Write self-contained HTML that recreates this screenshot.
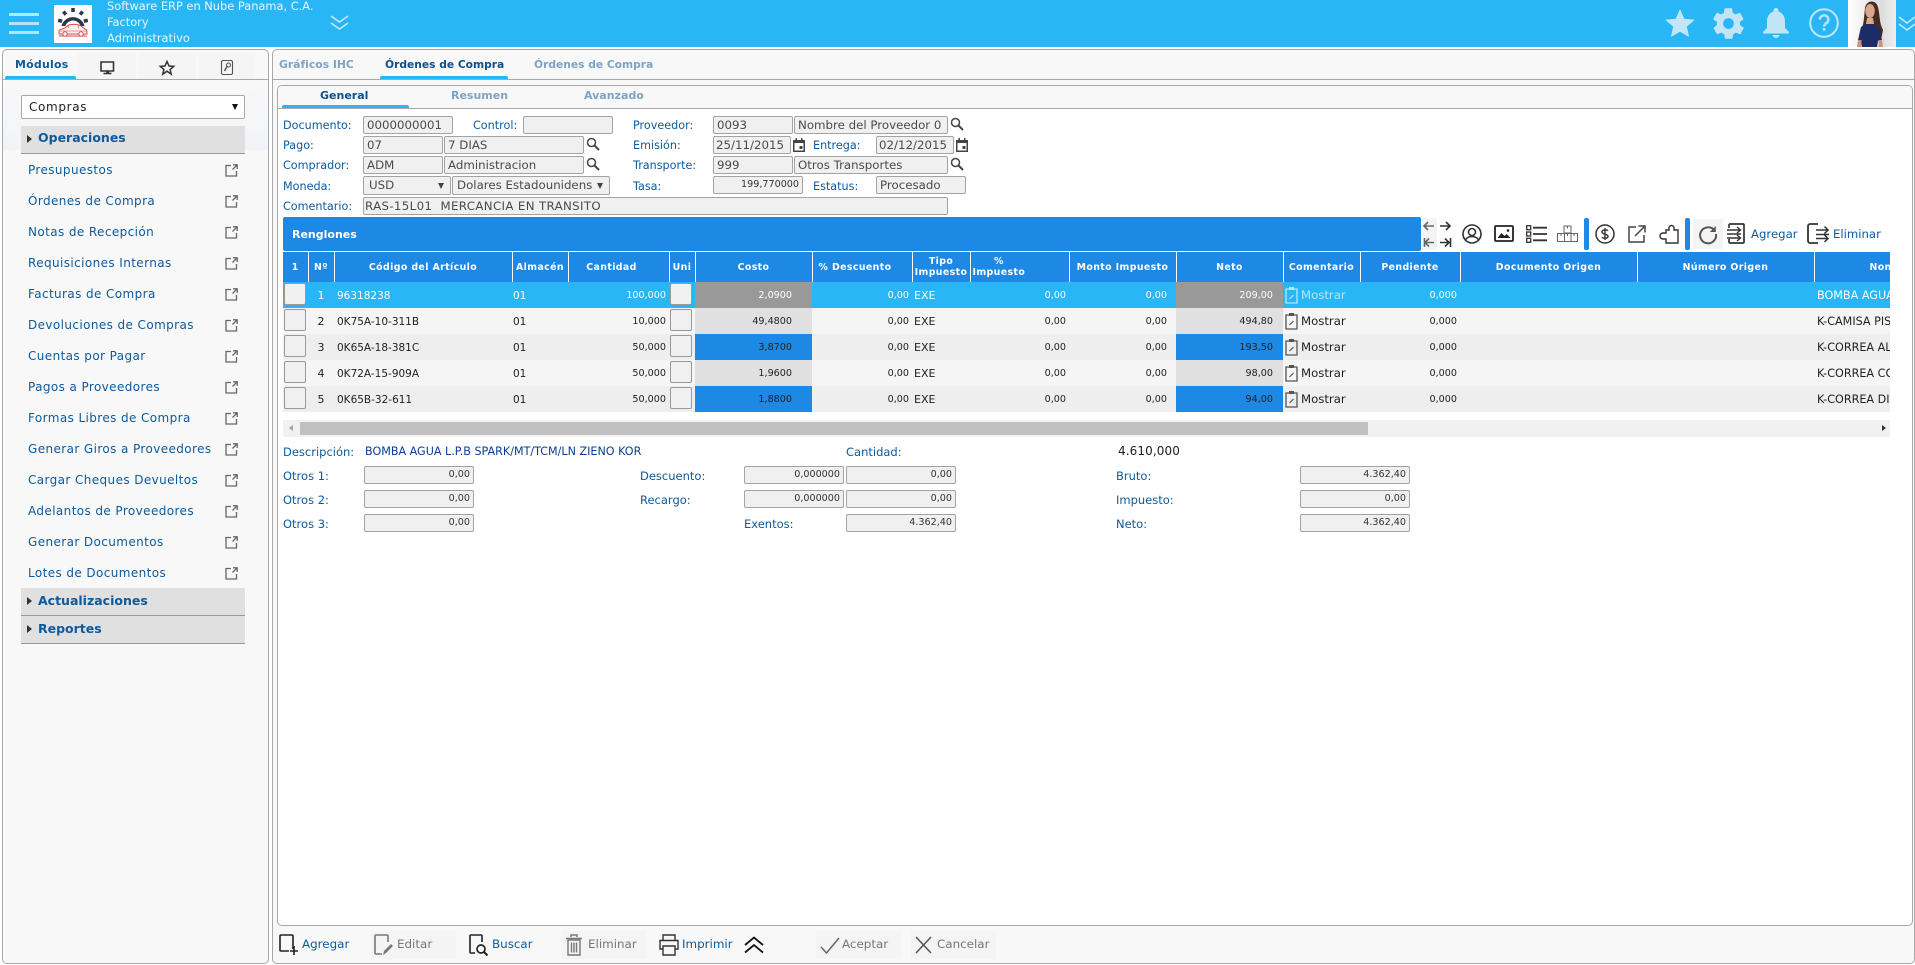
<!DOCTYPE html>
<html lang="es"><head><meta charset="utf-8"><title>Órdenes de Compra</title>
<style>
html,body{margin:0;padding:0;width:1915px;height:965px;overflow:hidden;background:#fff;font-family:"DejaVu Sans","Liberation Sans",sans-serif;color:#222}
.a{position:absolute;white-space:nowrap}
.l{position:absolute;white-space:nowrap;font-size:11.2px;color:#0d5a9c;line-height:18px;margin-top:1px}
.t{font-size:11.5px}
.i{position:absolute;box-sizing:border-box;height:18px;background:#f0f0f0;border:1px solid #a3a3a3;border-radius:2px;font-size:11.8px;line-height:16px;color:#4a4a4a;padding:0 3px;white-space:nowrap;overflow:hidden}
.n{text-align:right;font-size:9.6px;color:#333;padding:0 3px}
.m{position:absolute;left:28px;font-size:12px;letter-spacing:.4px;color:#0d5a9c;line-height:16px;white-space:nowrap}
.h{position:absolute;left:21px;width:224px;background:#e0e0e0;border-bottom:1px solid #999;box-sizing:border-box;font-weight:bold;font-size:12.5px;color:#0d5a9c;padding-left:17px;white-space:nowrap}
.h:before{content:"";position:absolute;left:6px;top:9px;border-left:5px solid #333;border-top:4px solid transparent;border-bottom:4px solid transparent}
.tab{position:absolute;font-weight:bold;white-space:nowrap;font-size:11px;line-height:14px}
.ul{position:absolute;background:#29b6f6;height:3px;border-radius:2px 2px 0 0}
.box{position:absolute;background:#f4f4f4}
.b{position:absolute;top:936px;font-size:11.9px;line-height:16px;white-space:nowrap}
svg{position:absolute;overflow:visible}
table{border-collapse:collapse;table-layout:fixed;width:1807px}
th{background:#1e88e5;color:#fff;font-size:9.4px;letter-spacing:.4px;font-weight:bold;height:30px;padding:0;border-left:1px solid #fff;text-align:center;line-height:11px;white-space:nowrap;overflow:hidden;box-sizing:border-box}
th:first-child{border-left:0}
td{height:26px;padding:1px 3px 0;font-size:10.5px;color:#222;white-space:nowrap;overflow:hidden;box-sizing:border-box;position:relative}
td.r{text-align:right;font-size:9.6px;padding:0 3px 0 0}
td.c{text-align:center;font-size:11px}
td.x{padding-left:2px;font-size:11px}
td.d{font-size:11.2px}
td.al{padding-left:1px}
td:nth-child(7){padding-right:20px}
td:nth-child(11){padding-right:9px}
td:nth-child(12){padding-right:10px}
tr.r1 td{background:#29b6f6;color:#fff}tr.r2 td{background:#f5f5f5}tr.r3 td{background:#eee}
tr.r1 td.k{background:#999}tr.r2 td.k{background:#e0e0e0}tr.r3 td.k{background:#1e88e5}
.cb{position:absolute;left:1px;top:1px;width:22px;height:22px;box-sizing:border-box;background:#f0f0f0;border:1px solid #999;border-radius:2px}
.mo{font-size:11.7px;position:absolute;left:18px;top:5px;line-height:16px}
</style></head><body>
<svg width="0" height="0" style="position:absolute"><defs>
<symbol id="ext" viewBox="0 0 13 13"><path d="M6 1.500H1v10.500h10.500V7M7.500 5.500L12 1M8 .8h4.200V5" fill="none" stroke="#666" stroke-width="1.300"/></symbol>
<symbol id="mg" viewBox="0 0 14 14"><circle cx="5.500" cy="5.500" r="4" fill="none" stroke="#444" stroke-width="1.500"/><path d="M8.500 8.500L13 13" stroke="#444" stroke-width="2"/></symbol>
<symbol id="cal" viewBox="0 0 12 14"><path d="M0 2h12v12H0z" fill="#444"/><path d="M1.500 5h9v7.500h-9z" fill="#fff"/><path d="M2.500 0h1.500v3H2.500zM8 0h1.500v3H8z" fill="#444"/><path d="M6.500 8h3v3h-3z" fill="#444"/></symbol>
<symbol id="clip" viewBox="0 0 13 18"><path d="M1 3h11v14H1z" fill="none" stroke="currentColor" stroke-width="1.300"/><path d="M4 1h5v3H4z" fill="currentColor"/><path d="M4.500 13l4-4" stroke="currentColor" stroke-width="1.200"/></symbol>
</defs></svg>

<!-- header -->
<div class="a" style="left:0;top:0;width:1915px;height:47px;background:#29b6f6"></div>
<div class="a" style="left:9px;top:12.500px;width:30px;height:3px;background:#b5e3f8"></div>
<div class="a" style="left:9px;top:21.500px;width:30px;height:3px;background:#b5e3f8"></div>
<div class="a" style="left:9px;top:31px;width:30px;height:3px;background:#b5e3f8"></div>
<div class="a" style="left:54px;top:5px;width:38px;height:38px;background:#fff"></div>
<svg style="left:54px;top:5px" width="38" height="38" viewBox="0 0 38 38">
<path d="M7.400 21A12 12 0 0 1 30.600 21L26.600 21A8 8 0 0 0 11.400 21Z" fill="#2b3a4a"/>
<g stroke="#2b3a4a" stroke-width="3.500"><path d="M19 3v4M26.100 9.600l2.500-3.100M11.900 9.600l-2.500-3.100M29.800 16.100l4-.7M8.200 16.100l-4-.7"/></g>
<path d="M5 29v-3c0-1 2-2 5-2.500l5-3.500c3-1 9-1 12 1l4 3c2 .5 2 2 2 5z" fill="#fdf0f0" stroke="#e0474c" stroke-width="1"/>
<path d="M6 26h26M15 20.500l-1 3M24 20.500l1 3" stroke="#e8777a" stroke-width=".8"/>
<path d="M5 31h28" stroke="#e0474c" stroke-width="1"/><circle cx="11" cy="29" r="2.200" fill="#fff" stroke="#e0474c"/><circle cx="27" cy="29" r="2.200" fill="#fff" stroke="#e0474c"/></svg>
<div class="a" style="left:107px;top:-2px;font-size:11.4px;line-height:16px;color:#e8f6fd">Software ERP en Nube Panama, C.A.<br>Factory<br>Administrativo</div>
<svg style="left:330px;top:15px" width="19" height="16"><path d="M1 1l8.500 6L18 1M1 8l8.500 6L18 8" fill="none" stroke="#c5e8f8" stroke-width="1.600"/></svg>
<svg style="left:1665px;top:8px" width="30" height="30" viewBox="0 0 30 30"><path d="M15 1l4.300 9.700 10.500 1-8 7 2.400 10.300L15 23.700 5.800 29l2.400-10.300-8-7 10.500-1z" fill="#c1e5f5"/></svg>
<svg style="left:1709.500px;top:4.500px" width="37" height="37" viewBox="0 0 24 24"><path d="M19.400 13c.1-.3.100-.7.100-1s0-.7-.1-1l2.100-1.600c.2-.2.200-.4.100-.6l-2-3.500c-.1-.2-.4-.3-.6-.2l-2.500 1c-.5-.4-1.100-.7-1.700-1l-.4-2.600c0-.3-.2-.4-.5-.4h-4c-.3 0-.5.200-.5.400l-.4 2.600c-.6.300-1.200.6-1.700 1l-2.500-1c-.2-.1-.5 0-.6.200l-2 3.500c-.1.200-.1.500.1.600L4.600 11c-.1.300-.1.700-.1 1s0 .7.100 1l-2.100 1.600c-.2.200-.2.400-.1.600l2 3.500c.1.200.4.300.6.200l2.500-1c.5.400 1.100.7 1.700 1l.4 2.600c0 .2.200.4.500.4h4c.3 0 .5-.2.500-.4l.4-2.600c.6-.3 1.200-.6 1.700-1l2.500 1c.2.100.5 0 .6-.2l2-3.500c.1-.2.100-.5-.1-.6zM12 15.500a3.500 3.500 0 1 1 0-7 3.500 3.500 0 0 1 0 7z" fill="#c1e5f5"/></svg>
<svg style="left:1761px;top:8px" width="30" height="30" viewBox="0 0 30 30"><path d="M15 0a2.500 2.500 0 0 1 2.500 2.500v1C22 5 24 9 24 13v7l4 4v1.500H2V24l4-4v-7c0-4 2-8 6.500-9.500v-1A2.500 2.500 0 0 1 15 0zM11.500 27h7a3.500 3 0 0 1-7 0z" fill="#c1e5f5"/></svg>
<svg style="left:1809px;top:8px" width="30" height="30" viewBox="0 0 30 30"><circle cx="15" cy="15" r="13.800" fill="none" stroke="#c1e5f5" stroke-width="2"/><path d="M10.800 11.500a4.300 4.200 0 1 1 6.800 3.500c-1.500 1-2.500 1.700-2.500 3.500" fill="none" stroke="#c1e5f5" stroke-width="2.300"/><rect x="13.800" y="20" width="2.500" height="2.700" fill="#c1e5f5"/></svg>
<svg style="left:1848px;top:0" width="48" height="47" viewBox="0 0 48 47">
<defs><linearGradient id="av" x1="0" x2="1" y1="0" y2="0"><stop offset="0" stop-color="#fff"/><stop offset=".7" stop-color="#ddd"/><stop offset="1" stop-color="#eee"/></linearGradient></defs>
<rect width="48" height="47" fill="url(#av)"/>
<g transform="translate(-2 0)">
<path d="M15 30c3-5 3-14 4-22 1-8 11-9 13-1 2 7 1 16 5 23l-2 10-5-12H21l-3 10z" fill="#4a2a1c"/>
<ellipse cx="24" cy="11" rx="4.800" ry="7" fill="#d9a78c"/><path d="M21 18h6l1 6H20z" fill="#d9a78c"/>
<path d="M15 27c3-2 5-3 6-3h6c2 0 4 1 6 3l3 13-4 1-1 6H16l-1-6-3-1z" fill="#1b2c66"/>
<path d="M12 40h3.500v7H11zM32.500 40H36l1 7h-4.500z" fill="#c8957a"/></g></svg>
<svg style="left:1899px;top:16px" width="16" height="15"><path d="M0 1l8 6 8-6M0 8l8 6 8-6" fill="none" stroke="#c5e8f8" stroke-width="1.500"/></svg>

<!-- left panel -->
<div class="a" style="left:2px;top:49px;width:267px;height:915px;box-sizing:border-box;background:#f8f8f8;border:1px solid #a8a8a8;border-radius:5px"></div>
<div class="a" style="left:3px;top:80px;width:265px;height:70px;background:linear-gradient(#f8f8f8,#f1f4f7)"></div>
<div class="a" style="left:3px;top:79px;width:265px;height:1px;background:#a8a8a8"></div>
<div class="box" style="left:78px;top:53px;width:58px;height:26px;background:#f5f5f5"></div>
<div class="box" style="left:138px;top:53px;width:58px;height:26px;background:#f5f5f5"></div>
<div class="box" style="left:198px;top:53px;width:57px;height:26px;background:#f5f5f5"></div>
<div class="tab" style="left:15px;top:58px;color:#0d5a9c;letter-spacing:.2px">Módulos</div>
<div class="ul" style="left:5px;top:76px;width:71px"></div>
<svg style="left:100px;top:61px" width="15" height="14"><path d="M1 1h12.500v9H1z" fill="none" stroke="#333" stroke-width="1.600"/><path d="M7 10.500h1.500V12H7zM3.500 12.500h8" stroke="#333" stroke-width="1.500"/></svg>
<svg style="left:159px;top:60px" width="16" height="15" viewBox="0 0 16 15"><path d="M8 1.500l2 4.500 4.700.4-3.600 3.100 1.100 4.600L8 11.200l-4.200 2.900 1.100-4.600L1.300 6.400 6 6z" fill="none" stroke="#333" stroke-width="1.500"/></svg>
<svg style="left:221px;top:60px" width="12" height="15"><path d="M1.500.5h9l1 1v12l-1 1h-9l-1-1v-12z" fill="none" stroke="#555" stroke-width="1.100"/><circle cx="7.500" cy="5" r="2" fill="none" stroke="#555" stroke-width="1.100"/><path d="M6 6.500l-2.500 4.500" stroke="#555" stroke-width="1.500"/></svg>

<div class="a" style="left:21px;top:95px;width:224px;height:24px;box-sizing:border-box;background:#fff;border:1px solid #a8a8a8;border-radius:2px;font-size:12px;letter-spacing:.65px;color:#222;line-height:22px;padding-left:7px">Compras</div>
<div class="a" style="left:232px;top:104px;border-top:6px solid #111;border-left:3.500px solid transparent;border-right:3.500px solid transparent"></div>
<div class="h" style="top:126px;height:28px;line-height:24px">Operaciones</div>
<div class="m" style="top:162px">Presupuestos</div>
<div class="m" style="top:193px">Órdenes de Compra</div>
<div class="m" style="top:224px">Notas de Recepción</div>
<div class="m" style="top:255px">Requisiciones Internas</div>
<div class="m" style="top:286px">Facturas de Compra</div>
<div class="m" style="top:317px">Devoluciones de Compras</div>
<div class="m" style="top:348px">Cuentas por Pagar</div>
<div class="m" style="top:379px">Pagos a Proveedores</div>
<div class="m" style="top:410px">Formas Libres de Compra</div>
<div class="m" style="top:441px">Generar Giros a Proveedores</div>
<div class="m" style="top:472px">Cargar Cheques Devueltos</div>
<div class="m" style="top:503px">Adelantos de Proveedores</div>
<div class="m" style="top:534px">Generar Documentos</div>
<div class="m" style="top:565px">Lotes de Documentos</div>
<svg style="left:225px;top:164px" width="13" height="13"><use href="#ext"/></svg>
<svg style="left:225px;top:195px" width="13" height="13"><use href="#ext"/></svg>
<svg style="left:225px;top:226px" width="13" height="13"><use href="#ext"/></svg>
<svg style="left:225px;top:257px" width="13" height="13"><use href="#ext"/></svg>
<svg style="left:225px;top:288px" width="13" height="13"><use href="#ext"/></svg>
<svg style="left:225px;top:319px" width="13" height="13"><use href="#ext"/></svg>
<svg style="left:225px;top:350px" width="13" height="13"><use href="#ext"/></svg>
<svg style="left:225px;top:381px" width="13" height="13"><use href="#ext"/></svg>
<svg style="left:225px;top:412px" width="13" height="13"><use href="#ext"/></svg>
<svg style="left:225px;top:443px" width="13" height="13"><use href="#ext"/></svg>
<svg style="left:225px;top:474px" width="13" height="13"><use href="#ext"/></svg>
<svg style="left:225px;top:505px" width="13" height="13"><use href="#ext"/></svg>
<svg style="left:225px;top:536px" width="13" height="13"><use href="#ext"/></svg>
<svg style="left:225px;top:567px" width="13" height="13"><use href="#ext"/></svg>
<div class="h" style="top:588px;height:28px;line-height:25px">Actualizaciones</div>
<div class="h" style="top:616px;height:28px;line-height:25px">Reportes</div>

<!-- right panel -->
<div class="a" style="left:272px;top:49px;width:1643px;height:915px;box-sizing:border-box;background:#f8f8f8;border:1px solid #a8a8a8;border-radius:5px"></div>
<div class="a" style="left:273px;top:79px;width:1642px;height:1px;background:#a8a8a8"></div>
<div class="tab" style="left:279px;top:58px;color:#7ea3c4;font-size:10.8px">Gráficos IHC</div>
<div class="tab" style="left:385px;top:58px;color:#0d4f8a;font-size:10.7px">Órdenes de Compra</div>
<div class="tab" style="left:534px;top:58px;color:#7ea3c4;font-size:10.7px">Órdenes de Compra</div>
<div class="ul" style="left:380px;top:76px;width:128px"></div>
<div class="a" style="left:277px;top:85px;width:1636px;height:841px;box-sizing:border-box;background:#fff;border:1px solid #a8a8a8;border-radius:5px"></div>
<div class="a" style="left:278px;top:86px;width:1634px;height:22px;background:#f8f8f8;border-bottom:1px solid #a8a8a8;border-radius:4px 4px 0 0"></div>
<div class="tab" style="left:320px;top:89px;color:#0d4f8a">General</div>
<div class="tab" style="left:451px;top:89px;color:#7ea3c4">Resumen</div>
<div class="tab" style="left:584px;top:89px;color:#7ea3c4">Avanzado</div>
<div class="ul" style="left:282px;top:105px;width:127px"></div>

<!-- form -->
<div class="l" style="left:283px;top:116px">Documento:</div>
<div class="i" style="left:363px;top:116px;width:90px">0000000001</div>
<div class="l" style="left:473px;top:116px">Control:</div>
<div class="i" style="left:523px;top:116px;width:90px"></div>
<div class="l" style="left:633px;top:116px">Proveedor:</div>
<div class="i" style="left:713px;top:116px;width:80px">0093</div>
<div class="i" style="left:794px;top:116px;width:154px">Nombre del Proveedor 0</div>
<svg style="left:950px;top:117px" width="14" height="14"><use href="#mg"/></svg>

<div class="l" style="left:283px;top:136px">Pago:</div>
<div class="i" style="left:363px;top:136px;width:80px">07</div>
<div class="i" style="left:444px;top:136px;width:140px">7 DIAS</div>
<svg style="left:586px;top:137px" width="14" height="14"><use href="#mg"/></svg>
<div class="l" style="left:633px;top:136px">Emisión:</div>
<div class="i" style="left:713px;top:136px;width:78px;padding:0 2px">25/11/2015</div>
<svg style="left:793px;top:138px" width="12" height="14"><use href="#cal"/></svg>
<div class="l" style="left:813px;top:136px">Entrega:</div>
<div class="i" style="left:876px;top:136px;width:78px;padding:0 2px">02/12/2015</div>
<svg style="left:956px;top:138px" width="12" height="14"><use href="#cal"/></svg>

<div class="l" style="left:283px;top:156px">Comprador:</div>
<div class="i" style="left:363px;top:156px;width:80px">ADM</div>
<div class="i" style="left:444px;top:156px;width:140px">Administracion</div>
<svg style="left:586px;top:157px" width="14" height="14"><use href="#mg"/></svg>
<div class="l" style="left:633px;top:156px">Transporte:</div>
<div class="i" style="left:713px;top:156px;width:80px">999</div>
<div class="i" style="left:794px;top:156px;width:154px">Otros Transportes</div>
<svg style="left:950px;top:157px" width="14" height="14"><use href="#mg"/></svg>

<div class="l" style="left:283px;top:177px">Moneda:</div>
<div class="i" style="left:363px;top:176px;width:88px;height:19px;padding-left:5px">USD</div>
<div class="a" style="left:438px;top:183px;border-top:6px solid #444;border-left:3.500px solid transparent;border-right:3.500px solid transparent"></div>
<div class="i" style="left:452px;top:176px;width:158px;height:19px;padding-left:4px">Dolares Estadounidens</div>
<div class="a" style="left:597px;top:183px;border-top:6px solid #444;border-left:3.500px solid transparent;border-right:3.500px solid transparent"></div>
<div class="l" style="left:633px;top:177px">Tasa:</div>
<div class="i n" style="left:713px;top:176px;width:90px;height:18px;line-height:16px">199,770000</div>
<div class="l" style="left:813px;top:177px">Estatus:</div>
<div class="i" style="left:876px;top:176px;width:90px">Procesado</div>

<div class="l" style="left:283px;top:197px">Comentario:</div>
<div class="i" style="left:363px;top:197px;width:585px;padding:0 1px;letter-spacing:.35px">RAS-15L01&nbsp; MERCANCIA EN TRANSITO</div>

<!-- renglones bar -->
<div class="a" style="left:283px;top:217px;width:1138px;height:34px;background:#1e88e5;border-radius:2px;color:#fff;font-weight:bold;font-size:11px;line-height:36px;padding-left:9px;box-sizing:border-box">Renglones</div>
<div class="box" style="left:1422px;top:218px;width:15px;height:32px"></div>
<svg style="left:1423px;top:219px" width="29" height="31" viewBox="0 0 29 31"><g fill="none" stroke="#666" stroke-width="1.600"><path d="M11 7H1M5 3L1 7l4 4"/><path d="M1.500 19v9M11 23.500H2M6 19.500l-4 4 4 4"/></g><g fill="none" stroke="#333" stroke-width="1.600"><path d="M17 7h10M23 3l4 4-4 4"/><path d="M27.500 19v9M17 23.500h9M22 19.500l4 4-4 4"/></g></svg>
<svg style="left:1462px;top:224px" width="20" height="20" viewBox="0 0 20 20"><circle cx="10" cy="10" r="9" fill="none" stroke="#333" stroke-width="1.600"/><circle cx="10" cy="8" r="3.500" fill="none" stroke="#333" stroke-width="1.600"/><path d="M3.500 16c1.500-3 4-3.500 6.500-3.500s5 .5 6.500 3.500" fill="none" stroke="#333" stroke-width="1.600"/></svg>
<svg style="left:1494px;top:225px" width="20" height="17" viewBox="0 0 20 17"><rect x="1" y="1" width="18" height="15" rx="1" fill="none" stroke="#222" stroke-width="1.800"/><path d="M3.500 13l4-5 3 3 2-2 4 4z" fill="#222"/><circle cx="14" cy="5.500" r="1.300" fill="#222"/></svg>
<svg style="left:1526px;top:225px" width="21" height="18" viewBox="0 0 21 18"><g fill="none" stroke="#333" stroke-width="1.300"><rect x=".7" y=".7" width="4" height="4"/><rect x=".7" y="7" width="4" height="4"/><rect x=".7" y="13.300" width="4" height="4"/></g><path d="M7 2.700h14M7 9h14M7 15.300h14" stroke="#333" stroke-width="1.800"/></svg>
<svg style="left:1557px;top:225px" width="21" height="17" viewBox="0 0 21 17"><g fill="none" stroke="#666" stroke-width="1"><path d="M7 1h7v7H7zM10.500 1v2.500"/><path d="M.5 8.500h7v8h-7zM4 8.500V11"/><path d="M7.500 8.500h6.500v8H7.500zM10.500 8.500V11"/><path d="M14 8.500h6.500v8H14zM17 8.500V11"/></g></svg>
<div class="a" style="left:1584px;top:218px;width:4.500px;height:32px;background:#1e88e5;border-radius:2px"></div>
<svg style="left:1595px;top:224px" width="20" height="20" viewBox="0 0 20 20"><circle cx="10" cy="10" r="9" fill="none" stroke="#333" stroke-width="1.500"/><path d="M13 6.800C12 5.800 7 5.200 7 8c0 2.800 6 1.500 6 4.300 0 2.700-5 2.200-6 1M10 4v12" fill="none" stroke="#333" stroke-width="1.400"/></svg>
<svg style="left:1628px;top:225px" width="18" height="18" viewBox="0 0 18 18"><path d="M8 2H1v15h15v-7M7 11L17 1M10.500 1H17v6.500" fill="none" stroke="#444" stroke-width="1.500"/></svg>
<svg style="left:1659px;top:224px" width="20" height="20" viewBox="0 0 20 20"><path d="M7 6h3V4a2.500 2.500 0 0 1 5 0v2h4v13H7v-4H4a3 3 0 0 1 0-6h3z" fill="none" stroke="#333" stroke-width="1.400"/></svg>
<div class="a" style="left:1685px;top:218px;width:5px;height:32px;background:#1e88e5;border-radius:2px"></div>
<div class="box" style="left:1693px;top:219px;width:30px;height:30px"></div>
<svg style="left:1699px;top:225px" width="18" height="18" viewBox="0 0 18 18"><path d="M15.500 5.500A8 8 0 1 0 17 9" fill="none" stroke="#555" stroke-width="2"/><path d="M16.800 1v6h-6z" fill="#555"/></svg>
<svg style="left:1727px;top:223px" width="19" height="21" viewBox="0 0 19 21"><path d="M2 5V2a1 1 0 0 1 1-1h13a1 1 0 0 1 1 1v17a1 1 0 0 1-1 1H3a1 1 0 0 1-1-1v-3" fill="none" stroke="#333" stroke-width="1.700"/><path d="M0 7h14M10 4l3.500 3L10 10M0 11h14M0 15h14M10 12l3.500 3L10 18" fill="none" stroke="#333" stroke-width="1.400"/></svg>
<div class="a" style="left:1751px;top:226px;font-size:11.7px;color:#0d5a9c;line-height:16px">Agregar</div>
<svg style="left:1807px;top:223px" width="24" height="21" viewBox="0 0 24 21"><path d="M11 1H3a2 2 0 0 0-2 2v15a2 2 0 0 0 2 2h8" fill="none" stroke="#333" stroke-width="1.800"/><path d="M9 7h12M17.500 3.500L21 7l-3.500 3.500M9 11.500h13M9 15.500h12M17.500 12l3.500 3.500-3.500 3.500" fill="none" stroke="#333" stroke-width="1.500"/></svg>
<div class="a" style="left:1833px;top:226px;font-size:11.7px;color:#0d5a9c;line-height:16px">Eliminar</div>

<!-- table -->
<div class="a" style="left:283px;top:251px;width:1607px;height:1px;background:#fff"></div>
<div class="a" style="left:283px;top:252px;width:1607px;height:160px;overflow:hidden">
<table><colgroup><col style="width:25px"><col style="width:26px"><col style="width:178px"><col style="width:56px"><col style="width:101px"><col style="width:26px"><col style="width:117px"><col style="width:100px"><col style="width:58px"><col style="width:99px"><col style="width:107px"><col style="width:107px"><col style="width:77px"><col style="width:100px"><col style="width:177px"><col style="width:177px"><col style="width:276px"></colgroup>
<tr><th>1</th><th>Nº</th><th>Código del Artículo</th><th>Almacén</th><th style="padding-right:14px">Cantidad</th><th>Uni</th><th>Costo</th><th style="padding-right:14px">% Descuento</th><th>Tipo<br>Impuesto</th><th style="text-align:left;padding-left:2px"><span style="display:inline-block;text-align:center">%<br>Impuesto</span></th><th>Monto Impuesto</th><th>Neto</th><th>Comentario</th><th>Pendiente</th><th>Documento Origen</th><th>Número Origen</th><th style="text-align:left;padding-left:55px">Nombre</th></tr>
<tr class="r1"><td><div class="cb"></div></td><td class="c">1</td><td>96318238</td><td class="al">01</td><td class="r">100,000</td><td><div class="cb"></div></td><td class="r k">2,0900</td><td class="r">0,00</td><td class="x">EXE</td><td class="r">0,00</td><td class="r">0,00</td><td class="r k">209,00</td><td style="color:#b8e4f8"><svg style="left:2px;top:4px" width="13" height="18"><use href="#clip"/></svg><span class="mo">Mostrar</span></td><td class="r">0,000</td><td></td><td></td><td class="d">BOMBA AGUA L.P.B SPARK/MT/TCM</td></tr>
<tr class="r2"><td><div class="cb"></div></td><td class="c">2</td><td>0K75A-10-311B</td><td class="al">01</td><td class="r">10,000</td><td><div class="cb"></div></td><td class="r k">49,4800</td><td class="r">0,00</td><td class="x">EXE</td><td class="r">0,00</td><td class="r">0,00</td><td class="r k">494,80</td><td style="color:#555"><svg style="left:2px;top:4px" width="13" height="18"><use href="#clip"/></svg><span class="mo" style="color:#222">Mostrar</span></td><td class="r">0,000</td><td></td><td></td><td class="d">K-CAMISA PISTON</td></tr>
<tr class="r3"><td><div class="cb"></div></td><td class="c">3</td><td>0K65A-18-381C</td><td class="al">01</td><td class="r">50,000</td><td><div class="cb"></div></td><td class="r k">3,8700</td><td class="r">0,00</td><td class="x">EXE</td><td class="r">0,00</td><td class="r">0,00</td><td class="r k">193,50</td><td style="color:#555"><svg style="left:2px;top:4px" width="13" height="18"><use href="#clip"/></svg><span class="mo" style="color:#222">Mostrar</span></td><td class="r">0,000</td><td></td><td></td><td class="d">K-CORREA ALTERNADOR</td></tr>
<tr class="r2"><td><div class="cb"></div></td><td class="c">4</td><td>0K72A-15-909A</td><td class="al">01</td><td class="r">50,000</td><td><div class="cb"></div></td><td class="r k">1,9600</td><td class="r">0,00</td><td class="x">EXE</td><td class="r">0,00</td><td class="r">0,00</td><td class="r k">98,00</td><td style="color:#555"><svg style="left:2px;top:4px" width="13" height="18"><use href="#clip"/></svg><span class="mo" style="color:#222">Mostrar</span></td><td class="r">0,000</td><td></td><td></td><td class="d">K-CORREA COMPRESOR</td></tr>
<tr class="r3"><td><div class="cb"></div></td><td class="c">5</td><td>0K65B-32-611</td><td class="al">01</td><td class="r">50,000</td><td><div class="cb"></div></td><td class="r k">1,8800</td><td class="r">0,00</td><td class="x">EXE</td><td class="r">0,00</td><td class="r">0,00</td><td class="r k">94,00</td><td style="color:#555"><svg style="left:2px;top:4px" width="13" height="18"><use href="#clip"/></svg><span class="mo" style="color:#222">Mostrar</span></td><td class="r">0,000</td><td></td><td></td><td class="d">K-CORREA DIRECCION</td></tr>
</table></div>

<!-- scrollbar -->
<div class="a" style="left:283px;top:420px;width:1607px;height:17px;background:#f1f1f1"></div>
<div class="a" style="left:300px;top:422px;width:1068px;height:13px;background:#c0c0c0"></div>
<div class="a" style="left:289px;top:425px;border-right:4px solid #a3a3a3;border-top:3.500px solid transparent;border-bottom:3.500px solid transparent"></div>
<div class="a" style="left:1882px;top:425px;border-left:4px solid #333;border-top:3.500px solid transparent;border-bottom:3.500px solid transparent"></div>

<!-- totals -->
<div class="l t" style="left:283px;top:442px">Descripción:</div>
<div class="l" style="left:365px;top:442px;font-size:11.15px;color:#0b3f94">BOMBA AGUA L.P.B SPARK/MT/TCM/LN ZIENO KOR</div>
<div class="l t" style="left:846px;top:442px">Cantidad:</div>
<div class="a" style="left:1118px;top:442px;font-size:12px;letter-spacing:.1px;line-height:18px;color:#222">4.610,000</div>
<div class="l t" style="left:283px;top:466px">Otros 1:</div><div class="i n" style="left:364px;top:466px;width:110px">0,00</div>
<div class="l t" style="left:283px;top:490px">Otros 2:</div><div class="i n" style="left:364px;top:490px;width:110px">0,00</div>
<div class="l t" style="left:283px;top:514px">Otros 3:</div><div class="i n" style="left:364px;top:514px;width:110px">0,00</div>
<div class="l t" style="left:640px;top:466px">Descuento:</div><div class="i n" style="left:744px;top:466px;width:100px">0,000000</div><div class="i n" style="left:846px;top:466px;width:110px">0,00</div>
<div class="l t" style="left:640px;top:490px">Recargo:</div><div class="i n" style="left:744px;top:490px;width:100px">0,000000</div><div class="i n" style="left:846px;top:490px;width:110px">0,00</div>
<div class="l t" style="left:744px;top:514px">Exentos:</div><div class="i n" style="left:846px;top:514px;width:110px">4.362,40</div>
<div class="l t" style="left:1116px;top:466px">Bruto:</div><div class="i n" style="left:1300px;top:466px;width:110px">4.362,40</div>
<div class="l t" style="left:1116px;top:490px">Impuesto:</div><div class="i n" style="left:1300px;top:490px;width:110px">0,00</div>
<div class="l t" style="left:1116px;top:514px">Neto:</div><div class="i n" style="left:1300px;top:514px;width:110px">4.362,40</div>

<!-- bottom toolbar -->
<div class="box" style="left:371px;top:931px;width:85px;height:28px"></div>
<div class="box" style="left:561px;top:931px;width:85px;height:28px"></div>
<div class="box" style="left:816px;top:931px;width:85px;height:28px"></div>
<div class="box" style="left:911px;top:931px;width:85px;height:28px"></div>
<svg style="left:279px;top:934px" width="20" height="22" viewBox="0 0 20 22"><path d="M14 15V2a1 1 0 0 0-1-1H2a1 1 0 0 0-1 1v14a1 1 0 0 0 1 1h8" fill="none" stroke="#222" stroke-width="1.600"/><path d="M15 12v9M11 17h8" stroke="#222" stroke-width="1.600"/></svg>
<div class="b" style="left:302px;color:#0d5a9c">Agregar</div>
<svg style="left:374px;top:934px" width="20" height="22" viewBox="0 0 20 22"><path d="M14 8V2a1 1 0 0 0-1-1H2a1 1 0 0 0-1 1v17a1 1 0 0 0 1 1h6" fill="none" stroke="#777" stroke-width="1.600"/><path d="M9 21l1-4 7-7 2 2-7 7z" fill="#777"/></svg>
<div class="b" style="left:397px;color:#777">Editar</div>
<svg style="left:469px;top:934px" width="20" height="22" viewBox="0 0 20 22"><path d="M13 8V2a1 1 0 0 0-1-1H2a1 1 0 0 0-1 1v16a1 1 0 0 0 1 1h4" fill="none" stroke="#222" stroke-width="1.600"/><circle cx="12" cy="15" r="4" fill="none" stroke="#222" stroke-width="1.700"/><path d="M15 18l3.500 3.500" stroke="#222" stroke-width="2"/></svg>
<div class="b" style="left:492px;color:#0d5a9c">Buscar</div>
<svg style="left:565px;top:934px" width="18" height="22" viewBox="0 0 18 22"><path d="M6 3V1h6v2M1 4.500h16" fill="none" stroke="#777" stroke-width="1.500"/><path d="M3 6h12v15H3zM6.500 8.500v10M9 8.500v10M11.500 8.500v10" fill="none" stroke="#777" stroke-width="1.400"/></svg>
<div class="b" style="left:588px;color:#777">Eliminar</div>
<svg style="left:659px;top:934px" width="20" height="22" viewBox="0 0 20 22"><path d="M4 6V1h12v5M4 15H1V6.500h18V15h-3M4 12h12v9H4z" fill="none" stroke="#333" stroke-width="1.400"/></svg>
<div class="b" style="left:682px;color:#0d5a9c">Imprimir</div>
<svg style="left:744px;top:936px" width="20" height="18" viewBox="0 0 20 18"><path d="M1 9l9-7.500L19 9M1 16.500L10 9l9 7.500" fill="none" stroke="#111" stroke-width="1.800"/></svg>
<svg style="left:820px;top:937px" width="20" height="17" viewBox="0 0 20 17"><path d="M1 10l5.500 6L19 1" fill="none" stroke="#666" stroke-width="1.500"/></svg>
<div class="b" style="left:842px;color:#777">Aceptar</div>
<svg style="left:915px;top:936px" width="17" height="18" viewBox="0 0 17 18"><path d="M1 1l15 16M16 1L1 17" fill="none" stroke="#555" stroke-width="1.500"/></svg>
<div class="b" style="left:937px;color:#777">Cancelar</div>
</body></html>
